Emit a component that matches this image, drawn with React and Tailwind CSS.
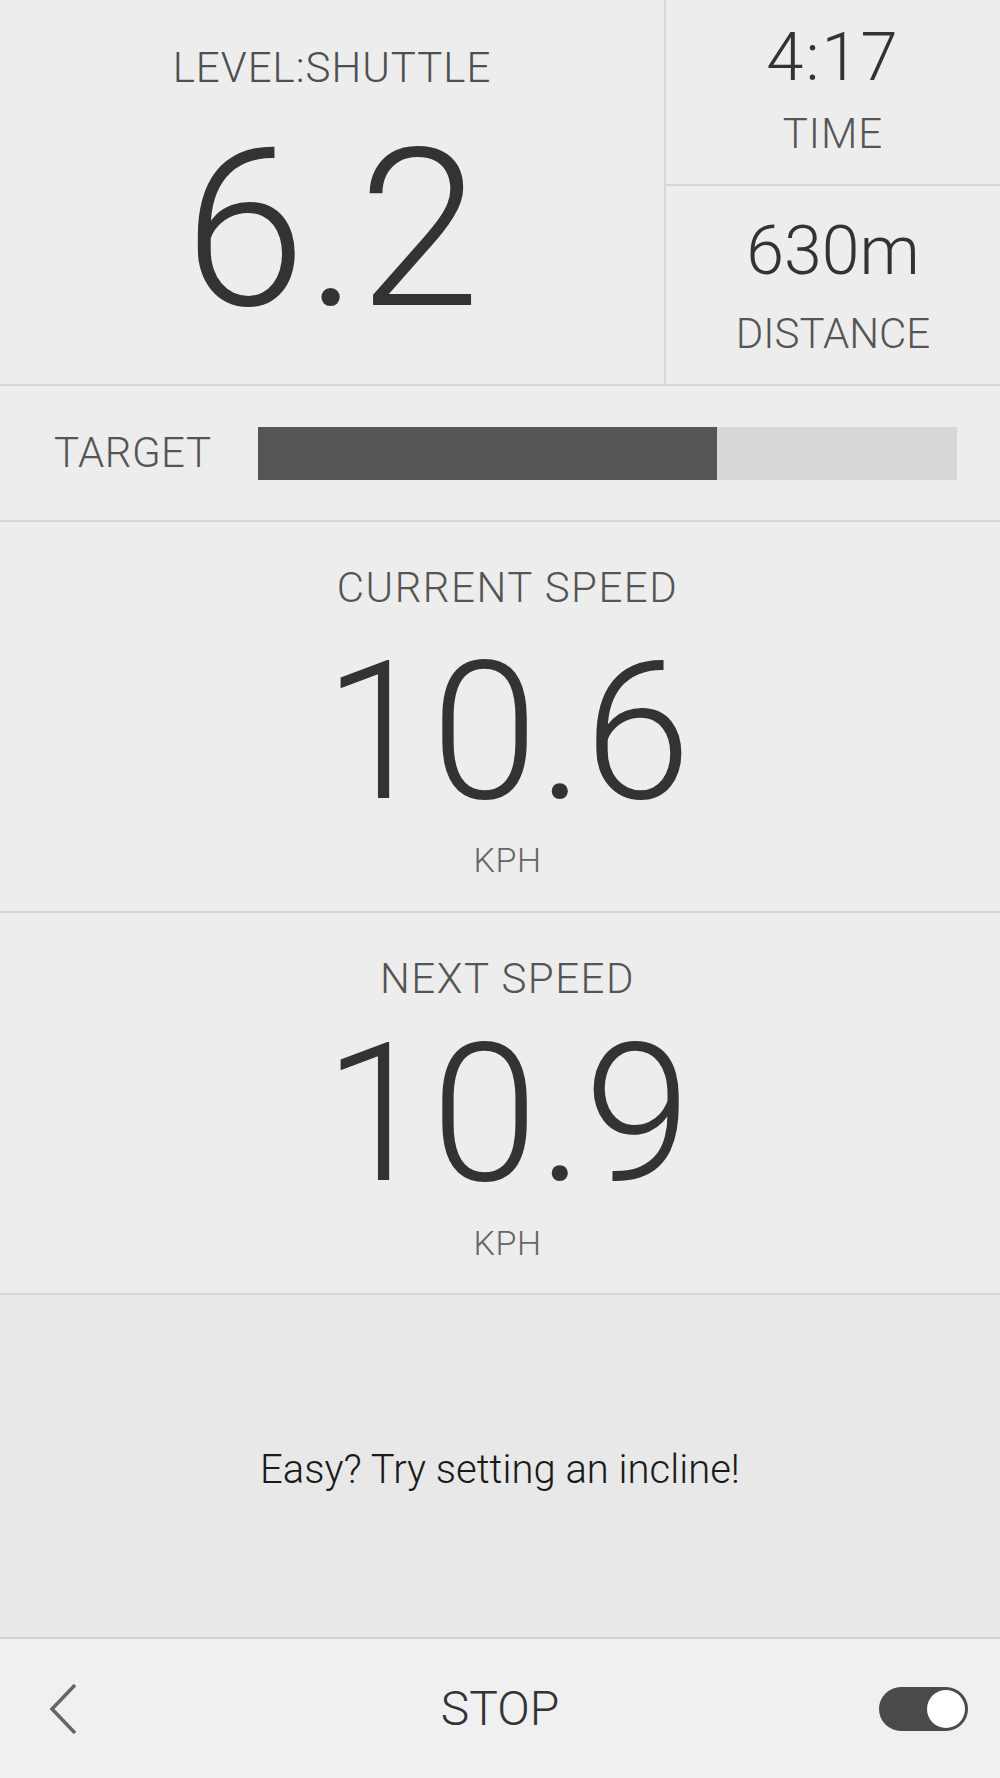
import React from 'react';

const font = { fontFamily: 'Roboto, "Liberation Sans", sans-serif' };

function Chevron() {
  return (
    <svg width="32" height="54" viewBox="0 0 32 54" fill="none">
      <path d="M28 3 L5 27 L28 51" stroke="#666" strokeWidth="3.5" strokeLinejoin="miter" />
    </svg>
  );
}

function Toggle() {
  return (
    <div className="flex h-[44px] w-[89px] items-center justify-end rounded-full bg-[#4a4a4a] pr-[3px]">
      <div className="h-[38px] w-[38px] rounded-full bg-white" />
    </div>
  );
}

export default function App() {
  const filled = 459; // px of the 699px target bar

  return (
    <div className="flex h-[1778px] w-[1000px] flex-col bg-[#ededed] font-light" style={font}>
      {/* level / time / distance */}
      <div className="flex h-[386px] border-b-2 border-[#d6d6d6]">
        <div className="flex w-[666px] flex-col items-center border-r-2 border-[#d6d6d6] pt-[47px]">
          <div className="text-[42px] leading-none tracking-[1px] text-[#4f4f4f]">LEVEL:SHUTTLE</div>
          <div className="mt-[31px] text-[220px] leading-none text-[#333]">6.2</div>
        </div>
        <div className="flex flex-1 flex-col">
          <div className="flex h-[186px] flex-col items-center border-b-2 border-[#d6d6d6] pt-[24px]">
            <div className="text-[67px] leading-none tracking-[2px] text-[#333]">4:17</div>
            <div className="mt-[22px] text-[42px] leading-none tracking-[1px] text-[#555]">TIME</div>
          </div>
          <div className="flex flex-1 flex-col items-center pt-[31px]">
            <div className="text-[68px] leading-none text-[#333]">630m</div>
            <div className="mt-[28px] text-[42px] leading-none text-[#555]">DISTANCE</div>
          </div>
        </div>
      </div>

      {/* target */}
      <div className="flex h-[136px] items-center border-b-2 border-[#d6d6d6]">
        <div className="w-[258px] pl-[54px] text-[42px] leading-none tracking-[0.5px] text-[#555]">TARGET</div>
        <div className="h-[53px] w-[699px] bg-[#d8d8d8]">
          <div className="h-full bg-[#555]" style={{ width: `${filled}px` }} />
        </div>
      </div>

      {/* current speed */}
      <div className="flex h-[391px] flex-col items-center border-b-2 border-[#d6d6d6] pl-[15px] pt-[45px]">
        <div className="text-[42px] leading-none tracking-[1.5px] text-[#555]">CURRENT SPEED</div>
        <div className="mt-[27px] text-[193px] leading-none text-[#333]">10.6</div>
        <div className="mt-[14px] text-[34px] leading-none tracking-[0.5px] text-[#666]">KPH</div>
      </div>

      {/* next speed */}
      <div className="flex h-[382px] flex-col items-center border-b-2 border-[#d6d6d6] pl-[15px] pt-[45px]">
        <div className="text-[42px] leading-none tracking-[1.5px] text-[#555]">NEXT SPEED</div>
        <div className="mt-[18px] text-[193px] leading-none text-[#333]">10.9</div>
        <div className="mt-[15px] text-[34px] leading-none tracking-[0.5px] text-[#666]">KPH</div>
      </div>

      {/* message */}
      <div className="flex h-[344px] items-center justify-center border-b-2 border-[#d2d2d2] bg-[#e8e8e8] pt-[8px]">
        <div className="text-[40px] leading-none text-[#1a1a1a]">Easy? Try setting an incline!</div>
      </div>

      {/* bottom bar */}
      <div className="relative flex flex-1 items-center justify-between bg-[#f0f0f0] pl-[47px] pr-[32px]">
        <Chevron />
        <div className="absolute left-1/2 -translate-x-1/2 text-[48px] leading-none text-[#333]">STOP</div>
        <Toggle />
      </div>
    </div>
  );
}
